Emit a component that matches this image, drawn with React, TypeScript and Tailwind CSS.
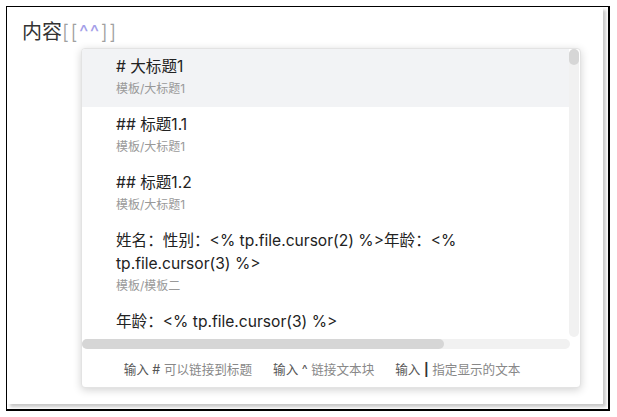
import React from "react";

const items = [
  { title: "# 大标题1", path: "模板/大标题1", active: true },
  { title: "## 标题1.1", path: "模板/大标题1" },
  { title: "## 标题1.2", path: "模板/大标题1" },
  { title: "姓名：性别：<% tp.file.cursor(2) %>年龄：<% tp.file.cursor(3) %>", path: "模板/模板二" },
  { title: "年龄：<% tp.file.cursor(3) %>", path: "模板/模板二" },
];

const hints = [
  { key: "#", text: "可以链接到标题" },
  { key: "^", text: "链接文本块" },
  { key: "|", text: "指定显示的文本" },
];

export default function App() {
  return (
    <div
      className="w-[617px] h-[417px] bg-white pt-[6px] pl-[6px]"
      style={{ fontFamily: 'Inter, "Noto Sans CJK SC", sans-serif' }}
    >
      <div className="w-[604px] h-[405px] border border-black border-r-2 border-b-2 bg-white">
        <div className="w-[596px] h-[397px] pt-[11px] pl-[15px] shadow-[3px_3px_3px_rgba(0,0,0,0.22)]">
          {/* 编辑器中的输入 */}
          <div className="text-[20px] leading-[28px] text-[#333]">
            内容<span className="text-[#a0a0a0] font-light tracking-[1.5px]">[[</span>
            <span className="text-[#a49ee8] tracking-[1.5px]">^^</span>
            <span className="text-[#a0a0a0] font-light tracking-[1.5px]">]]</span>
          </div>

          {/* 建议弹窗 */}
          <div className="mt-[2px] ml-[59px] w-[500px] h-[340px] rounded-[4px] border border-[#e3e3e3] bg-white shadow-[0_2px_8px_rgba(0,0,0,0.18)] flex flex-col overflow-hidden">
            <div className="flex h-[288px]">
              <div className="flex-1 overflow-hidden">
                {items.map((it) => (
                  <div
                    key={it.title}
                    className={`pl-[34px] pr-[20px] pt-[6px] pb-[7px] ${it.active ? "bg-[#f2f3f5]" : ""}`}
                  >
                    <div className="text-[15.6px] leading-[23px] text-[#222]">{it.title}</div>
                    <div className="text-[12px] leading-[22px] text-[#999]">{it.path}</div>
                  </div>
                ))}
              </div>
              <div className="w-[10px] bg-[#f1f1f1] rounded-[5px] mr-[1px]">
                <div className="h-[16px] rounded-[5px] bg-[#d6d6d6]" />
              </div>
            </div>
            <div className="h-[10px] mt-[2px] mr-[10px] bg-[#f1f1f1] rounded-[5px]">
              <div className="h-full w-[362px] rounded-[5px] bg-[#d6d6d6]" />
            </div>
            <div className="flex-1 flex items-center justify-center gap-[21px] pt-[4px] pr-[18px] text-[12.6px] text-[#888]">
              {hints.map((h) => (
                <span key={h.key}>
                  <span className="text-[#555]">输入 </span>
                  <span className={h.key === "|" ? "text-[#333] font-bold" : "text-[#555]"}>{h.key}</span>{" "}
                  {h.text}
                </span>
              ))}
            </div>
          </div>
        </div>
      </div>
    </div>
  );
}
